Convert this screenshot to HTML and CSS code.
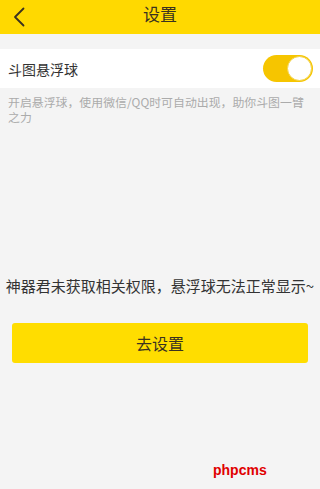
FILE: index.html
```html
<!DOCTYPE html>
<html lang="zh">
<head>
<meta charset="utf-8">
<link rel="stylesheet" href="styles.css">
</head>
<body>
<div class="page">
  <header class="topbar">
    <svg class="back" width="12" height="20" viewBox="0 0 12 20"><polyline points="10.5,1.5 2,10 10.5,18.5" fill="none" stroke="#3a3220" stroke-width="1.8" stroke-linecap="round" stroke-linejoin="round"/></svg>
    <h1 class="title">设置</h1>
  </header>
  <div class="row">
    <span class="label">斗图悬浮球</span>
    <span class="switch"><span class="knob"></span></span>
  </div>
  <p class="desc">开启悬浮球，使用微信/QQ时可自动出现，助你斗图一臂之力</p>
  <p class="msg">神器君未获取相关权限，悬浮球无法正常显示~</p>
  <div class="btn">去设置</div>
  <div class="mark">phpcms</div>
</div>
</body>
</html>
```
FILE: styles.css
```css
* { box-sizing: border-box; }
html, body { margin: 0; padding: 0; }
body {
  background: #f4f4f4;
  font-family: "Noto Sans CJK SC", "Noto Sans", sans-serif;
  color: #333;
}
.page { position: relative; width: 320px; height: 489px; overflow: hidden; }
.topbar {
  position: relative;
  height: 34px;
  background: #ffd900;
  display: flex;
  align-items: center;
  justify-content: center;
}
.back { position: absolute; left: 13px; top: 7px; }
.title {
  margin: 0;
  font-size: 17px;
  font-weight: normal;
  color: #3a3220;
  line-height: 34px;
  position: relative;
  top: -3px;
}
.row {
  margin-top: 15px;
  height: 39px;
  background: #fff;
  display: flex;
  align-items: center;
  justify-content: space-between;
  padding: 0 7px 0 8px;
}
.label { font-size: 14px; color: #333; line-height: 1; }
.switch {
  width: 50px;
  height: 27px;
  border-radius: 14px;
  background: #f6c500;
  display: flex;
  align-items: center;
  justify-content: flex-end;
  padding-right: 1px;
}
.knob {
  width: 25px;
  height: 25px;
  border-radius: 50%;
  background: #fff;
  border: 1px solid #f3d34a;
}
.desc {
  margin: 0;
  padding: 6px 10px 0 8px;
  font-size: 11.9px;
  line-height: 15px;
  color: #ababab;
}
.msg {
  margin: 152px 0 0;
  text-align: center;
  font-size: 15px;
  line-height: 20px;
  color: #333;
  white-space: nowrap;
}
.btn {
  margin: 27px 12px 0;
  height: 40px;
  background: #ffdd00;
  border-radius: 3px;
  display: flex;
  align-items: center;
  justify-content: center;
  font-size: 16px;
  color: #3a3220;
}
.mark {
  position: absolute;
  left: 213px;
  top: 462px;
  font-family: "Liberation Sans", Arial, sans-serif;
  font-weight: bold;
  font-size: 14px;
  color: #e00000;
  line-height: 16px;
}
```
